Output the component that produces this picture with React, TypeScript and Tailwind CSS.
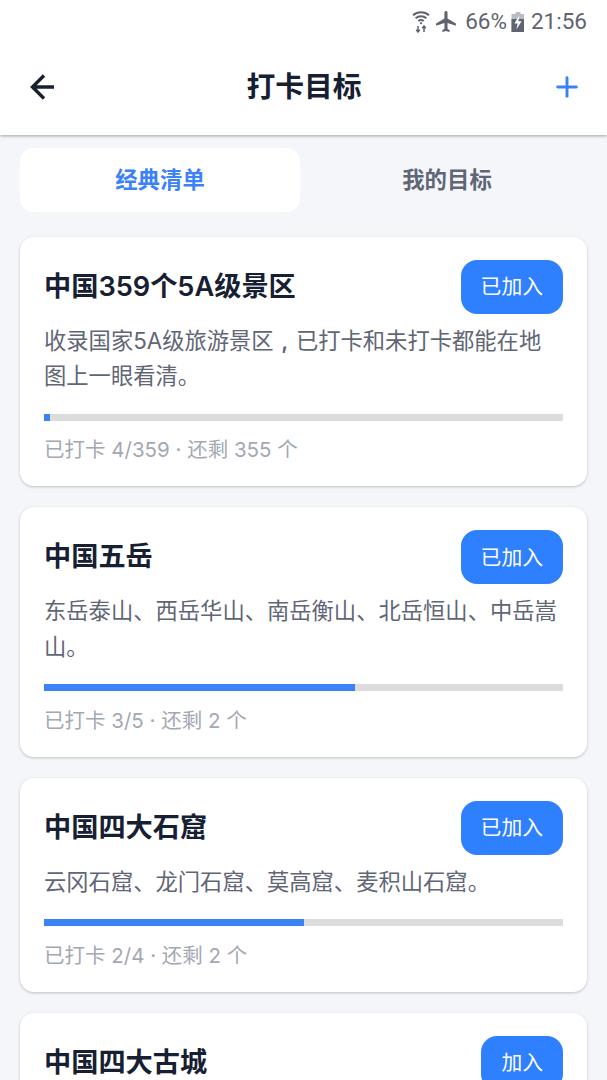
import { Plus } from "lucide-react";

interface Goal {
  title: string;
  desc?: string;
  meta?: string;
  percent: number;
  action: string;
}

const goals: Goal[] = [
  {
    title: "中国359个5A级景区",
    desc: "收录国家5A级旅游景区，已打卡和未打卡都能在地图上一眼看清。",
    meta: "已打卡 4/359 · 还剩 355 个",
    percent: 1.1,
    action: "已加入",
  },
  {
    title: "中国五岳",
    desc: "东岳泰山、西岳华山、南岳衡山、北岳恒山、中岳嵩山。",
    meta: "已打卡 3/5 · 还剩 2 个",
    percent: 60,
    action: "已加入",
  },
  {
    title: "中国四大石窟",
    desc: "云冈石窟、龙门石窟、莫高窟、麦积山石窟。",
    meta: "已打卡 2/4 · 还剩 2 个",
    percent: 50,
    action: "已加入",
  },
  // 画面只露出标题和按钮
  { title: "中国四大古城", percent: 0, action: "加入" },
];

function WifiIcon() {
  return (
    <svg width="18" height="23" viewBox="0 0 18 23" fill="none" stroke="#5f6470" strokeWidth="1.9">
      <path d="M1 5.2C5.5 1.2 12.5 1.2 17 5.2" />
      <path d="M3.6 8.2C6.7 5.5 11.3 5.5 14.4 8.2" />
      <path d="M6.2 11C7.9 9.7 10.1 9.7 11.8 11" />
      <circle cx="9" cy="13.2" r="1.1" fill="#5f6470" stroke="none" />
      <path d="M6 16v6M4.2 19.8 6 22l1.8-2.2M12 22v-6M10.2 18.2 12 16l1.8 2.2" strokeWidth="1.5" />
    </svg>
  );
}

function PlaneIcon() {
  return (
    <svg width="25" height="25" viewBox="0 0 24 24" fill="#5f6470">
      <path d="M21 16v-2l-8-5V3.5c0-.83-.67-1.5-1.5-1.5S10 2.67 10 3.5V9l-8 5v2l8-2.5V19l-2 1.5V22l3.5-1 3.5 1v-1.5L13 19v-5.5l8 2.5z" />
    </svg>
  );
}

function BatteryIcon() {
  return (
    <svg width="14" height="20" viewBox="0 0 14 20">
      <path d="M4.5 0h5v2H13v18H0.5V2h4z" fill="#b9bcc4" />
      <path d="M0.5 7h12.5v13H0.5z" fill="#5f6470" />
      <path d="M8.4 3.5 3.4 11.5h3.2L5.4 17.5l5.2-8.2H7.4z" fill="#fff" />
    </svg>
  );
}

function BackArrow() {
  return (
    <svg width="28" height="28" viewBox="0 0 28 28" fill="none" stroke="#172033" strokeWidth="3.4">
      <path d="M15 2.5 3.5 14 15 25.5M3.5 14H25" />
    </svg>
  );
}

function StatusBar() {
  return (
    <div className="flex h-[43px] items-center justify-end pr-5 font-['Roboto',sans-serif] text-[22.5px] leading-none text-[#5f6470]">
      <WifiIcon />
      <span className="ml-1">
        <PlaneIcon />
      </span>
      <span className="ml-[6px]">66%</span>
      <span className="ml-1">
        <BatteryIcon />
      </span>
      <span className="ml-[6px]">21:56</span>
    </div>
  );
}

// 参考图里全角逗号水平居中，用半角逗号放进一个字宽的格子里
function Desc({ text }: { text: string }) {
  const parts = text.split("，");
  return (
    <p className="mt-[9px] text-[22.3px] leading-[35.2px] text-[#5f6675]">
      {parts[0]}
      {parts.length > 1 && (
        <>
          <span className="inline-block w-[1em] text-center font-semibold">,</span>
          {parts[1]}
        </>
      )}
    </p>
  );
}

function GoalCard({ goal }: { goal: Goal }) {
  return (
    <div className="rounded-[14px] bg-white px-6 pt-[23px] pb-[20.2px] shadow-[0_1px_3px_rgba(0,0,0,0.22)]">
      <div className="flex items-center justify-between">
        <h2 className="text-[27.2px] leading-[34px] font-semibold text-[#172033]">{goal.title}</h2>
        <button className="flex h-[54px] items-center rounded-[16px] bg-[#2f80ff] px-5 text-[20.8px] text-white">
          {goal.action}
        </button>
      </div>
      {goal.desc && (
        <>
          <Desc text={goal.desc} />
          <div className="mt-[20.4px] h-[7px] bg-[#dcdcdc]">
            <div className="h-full bg-[#3b82f6]" style={{ width: `${goal.percent}%` }} />
          </div>
          <p className="mt-[13.4px] text-[20.5px] leading-[32px] text-[#a3a8b3]">{goal.meta}</p>
        </>
      )}
    </div>
  );
}

export default function App() {
  return (
    <div className="h-[1080px] overflow-hidden bg-[#f4f6fa] font-['Inter','Noto_Sans_CJK_SC',sans-serif]">
      <header className="relative z-10 h-[135px] bg-white shadow-[0_1px_3px_rgba(0,0,0,0.35)]">
        <StatusBar />
        <div className="flex h-[88px] items-center pr-6 pl-[29px]">
          <BackArrow />
          <h1 className="flex-1 text-center text-[28.8px] font-semibold text-[#172033]">打卡目标</h1>
          <Plus className="h-8 w-8 text-[#3b82f6]" strokeWidth={2.2} />
        </div>
      </header>

      <div className="px-5 pt-[13px]">
        <div className="grid grid-cols-2 gap-[7px]">
          <div className="flex h-[64px] items-center justify-center rounded-[14px] bg-white text-[22.4px] font-semibold text-[#3b82f6]">
            经典清单
          </div>
          <div className="flex h-[64px] items-center justify-center text-[22.4px] font-semibold text-[#5f6675]">
            我的目标
          </div>
        </div>

        <div className="mt-[25px] flex flex-col gap-[21px]">
          {goals.map((goal) => (
            <GoalCard key={goal.title} goal={goal} />
          ))}
        </div>
      </div>
    </div>
  );
}
